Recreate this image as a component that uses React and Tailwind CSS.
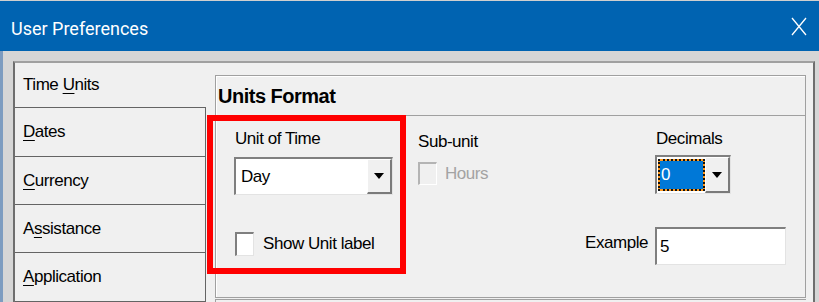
const TABS = [
  { pre: "Time ", key: "U", post: "nits", h: "h-[45px]", active: true },
  { pre: "", key: "D", post: "ates", h: "h-[49px]" },
  { pre: "", key: "C", post: "urrency", h: "h-[49px]" },
  { pre: "A", key: "s", post: "sistance", h: "h-[48px]" },
  { pre: "", key: "A", post: "pplication", h: "h-[49px]" },
];

const ComboButton = () => (
  <div className="w-[25px] h-full bg-[#f0f0f0] border-t border-l border-t-white border-l-white border-b-2 border-r-2 border-b-[#7a7a7a] border-r-[#7a7a7a] flex items-center justify-center">
    <svg width="10" height="6" viewBox="0 0 10 6">
      <path d="M0 0 H10 L5 6 Z" fill="#000" />
    </svg>
  </div>
);

const Sunken = ({ className, children }) => (
  <div
    className={`border-t-2 border-l-2 border-t-[#7f7f7f] border-l-[#7f7f7f] border-b border-r border-b-[#e3e3e3] border-r-[#e3e3e3] bg-white ${className}`}
  >
    {children}
  </div>
);

const Tab = ({ tab }) => (
  <div
    className={`${tab.h} flex items-center pl-[8px] border-b border-[#646464] ${
      tab.active ? "" : "border-r"
    }`}
  >
    <span>
      {tab.pre}
      <span className="underline underline-offset-[3px]">{tab.key}</span>
      {tab.post}
    </span>
  </div>
);

export default function App() {
  return (
    <div className="relative w-[819px] h-[302px] overflow-hidden bg-[#d6d6d6] font-['Liberation_Sans',Arial,sans-serif] text-[17px] tracking-[-0.45px] text-black">
      {/* title bar */}
      <div className="h-[51px] border-t border-[#cfcfcf] bg-[#0063b1] flex items-center justify-between pl-[11px] pr-[12px] tracking-normal">
        <span className="mt-[5px] text-white text-[18px] font-['Roboto',sans-serif]">User Preferences</span>
        <svg width="16" height="19" viewBox="0 0 16 19" className="mt-[1px]">
          <path d="M1 1 L15 18 M15 1 L1 18" stroke="#fff" strokeWidth="1.3" fill="none" />
        </svg>
      </div>

      {/* window body */}
      <div className="h-[251px] border-l-[3px] border-[#7d9cc0] pl-[10px] pt-[10px] pr-[4px]">
        <div className="h-full flex border-t-2 border-t-[#a0a0a0] border-l-2 border-l-[#6e6e6e] border-r-2 border-r-[#6e6e6e] bg-[#f0f0f0]">
          {/* tab list */}
          <div className="w-[191px] shrink-0 flex flex-col">
            {TABS.map((t) => (
              <Tab key={t.pre + t.key + t.post} tab={t} />
            ))}
          </div>

          {/* tab page */}
          <div className="flex-1 pl-[9px] pt-[12px] pr-[7px]">
            <div className="border border-[#a0a0a0] shadow-[inset_1px_1px_0_#ffffff]">
              <div className="h-[40px] border-b border-[#a0a0a0] flex items-center pl-[2px]">
                <span className="font-bold text-[20px] tracking-[-0.5px]">Units Format</span>
              </div>

              <div className="h-[181px] flex pl-[18px] leading-[22px]">
                {/* unit of time */}
                <div className="w-[184px] pt-[12px]">
                  <div className="pl-[1px]">Unit of Time</div>
                  <Sunken className="mt-[7px] w-[159px] h-[38px] flex items-stretch">
                    <div className="flex-1 flex items-center pl-[5px]">Day</div>
                    <ComboButton />
                  </Sunken>
                  <div className="mt-[37px] flex items-center gap-[9px] pl-[1px]">
                    <Sunken className="w-[19px] h-[24px]" />
                    <span>Show Unit label</span>
                  </div>
                </div>

                {/* sub-unit */}
                <div className="w-[167px] pt-[15px]">
                  <div>Sub-unit</div>
                  <div className="mt-[9px] flex items-center gap-[8px]">
                    <div className="w-[19px] h-[23px] border-t-2 border-l-2 border-t-[#b4b4b4] border-l-[#b4b4b4] border-b border-r border-b-white border-r-white" />
                    <span className="text-[#a3a3a3]">Hours</span>
                  </div>
                </div>

                {/* decimals + example */}
                <div className="flex-1 pt-[12px]">
                  <div className="pl-[70px]">
                    <div className="pl-[1px]">Decimals</div>
                    <Sunken className="mt-[5px] w-[76px] h-[39px] flex items-stretch">
                      <div className="flex-1 p-[1px] pr-0 py-[2px]">
                        <div className="h-full bg-[#ff9a1f]">
                          <div className="h-full border-2 border-dotted border-[#111] bg-[#0078d7] bg-clip-padding flex items-center pl-[1px] text-white">
                            0
                          </div>
                        </div>
                      </div>
                      <ComboButton />
                    </Sunken>
                  </div>
                  <div className="mt-[33px] flex items-center">
                    <span className="w-[70px] pb-[6px]">Example</span>
                    <Sunken className="w-[131px] h-[38px] flex items-center pl-[3px]">5</Sunken>
                  </div>
                </div>
              </div>
            </div>
            <div className="mt-[1px] h-[10px] border-t border-l border-[#a0a0a0]" />
          </div>
        </div>
      </div>

      {/* highlight */}
      <div className="absolute left-[207px] top-[115px] w-[199px] h-[159px] border-[6px] border-[#ff0000]" />
    </div>
  );
}
